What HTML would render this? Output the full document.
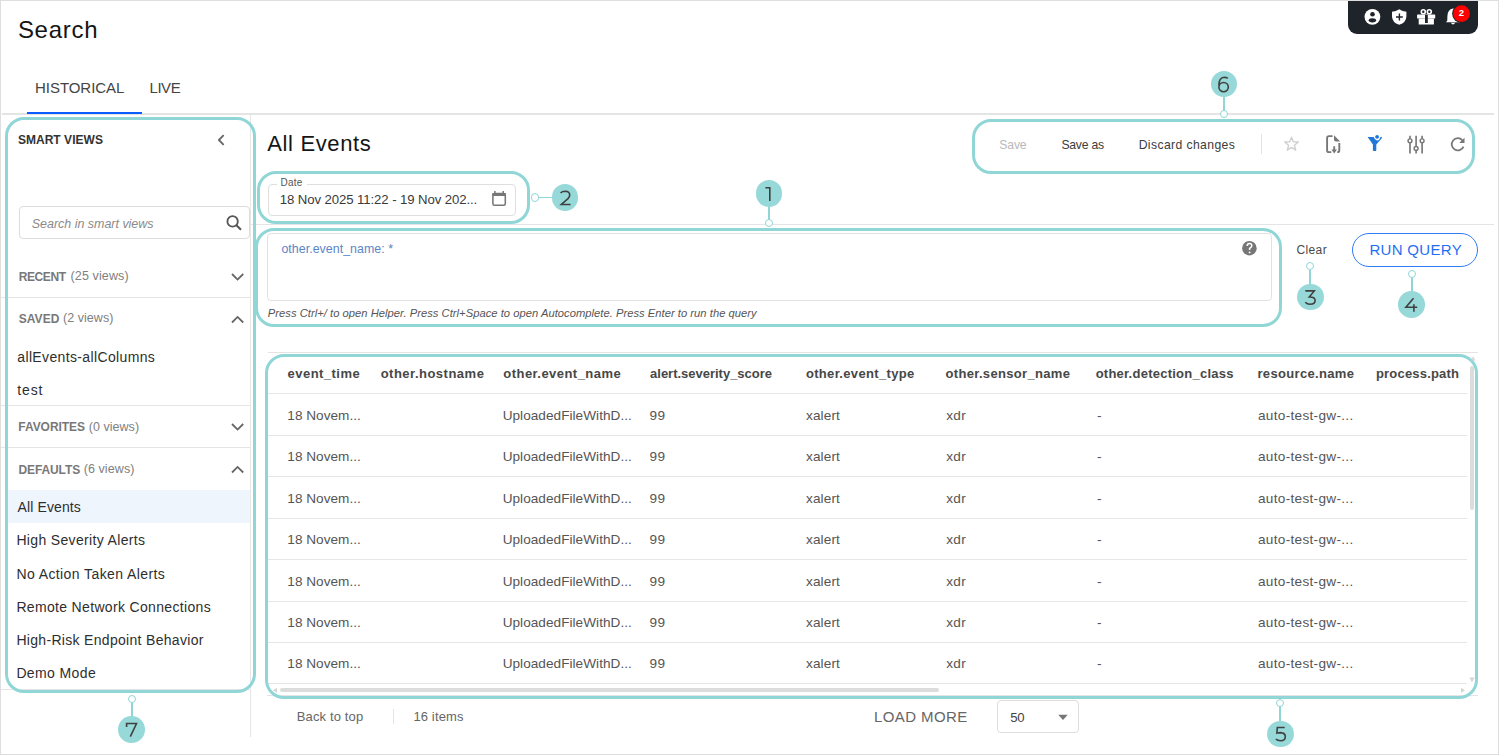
<!DOCTYPE html>
<html><head><meta charset="utf-8">
<style>
*{box-sizing:border-box;margin:0;padding:0}
html,body{width:1499px;height:755px;overflow:hidden;background:#fff;font-family:"Liberation Sans",sans-serif;color:#333}
.a{position:absolute;white-space:nowrap}
svg{position:absolute;overflow:visible}
</style></head><body>

<div class="a" style="left:0px;top:0px;width:1499px;height:755px;border:1px solid #dedede"></div>
<div class="a" style="left:17.92px;top:17.88px;font-size:24px;line-height:24px;color:#151515;letter-spacing:0.708px;">Search</div>
<div class="a" style="left:1348px;top:1px;width:130px;height:33px;background:#1f232a;border-radius:0 0 9px 9px"></div>
<svg style="left:0;top:0" width="1499" height="40">
<circle cx="1372.4" cy="16.8" r="7.9" fill="#fff"/>
<circle cx="1372.5" cy="14.2" r="2.3" fill="#1f232a"/>
<ellipse cx="1372.4" cy="20.3" rx="3.7" ry="2.1" fill="#1f232a"/>
<path d="M1399.2 9.3 Q1402.5 11.6 1406.4 11.8 L1406.4 16.5 Q1406.2 22.6 1399.2 24.8 Q1392.2 22.6 1392 16.5 L1392 11.8 Q1395.9 11.6 1399.2 9.3 Z" fill="#fff"/>
<path d="M1399.4 13.6 V20.4 M1396 17 H1402.8" stroke="#1f232a" stroke-width="1.4"/>
<rect x="1417.1" y="14.4" width="18.1" height="4.2" rx="0.6" fill="#fff"/>
<rect x="1418.7" y="18.4" width="15.2" height="6.1" rx="0.6" fill="#fff"/>
<circle cx="1423.3" cy="11.8" r="2.0" stroke="#fff" stroke-width="1.6" fill="none"/>
<circle cx="1429.3" cy="11.8" r="2.0" stroke="#fff" stroke-width="1.6" fill="none"/>
<rect x="1425" y="15" width="2.8" height="8" fill="#1f232a"/>
<path d="M1453 8.4 Q1447.5 9.4 1447.4 16 L1447.3 20.6 L1446 22.3 L1460 22.3 L1458.7 20.6 L1458.6 16 Q1458.5 9.4 1453 8.4Z" fill="#fff"/>
<path d="M1450.8 22.8 Q1453 26.4 1455.2 22.8Z" fill="#fff"/>
<circle cx="1461.5" cy="13.6" r="9.4" fill="#1f232a"/>
<circle cx="1461.5" cy="13.6" r="8.4" fill="#f00"/>
<text x="1461.4" y="16.2" font-size="9.5" font-weight="bold" fill="#fff" text-anchor="middle" font-family="Liberation Sans">2</text>
</svg>
<div class="a" style="left:35.04px;top:80.00px;font-size:15px;line-height:15px;color:#444;letter-spacing:-0.047px;">HISTORICAL</div>
<div class="a" style="left:149.52px;top:80.00px;font-size:15px;line-height:15px;color:#444;letter-spacing:-0.460px;">LIVE</div>
<div class="a" style="left:2px;top:113px;width:1492px;height:2px;background:#e4e4e4"></div>
<div class="a" style="left:27px;top:112px;width:114.5px;height:2px;background:#0a5cff"></div>
<div class="a" style="left:250px;top:115px;width:1px;height:622px;background:#e6e6e6"></div>
<div class="a" style="left:8px;top:490px;width:242px;height:33px;background:#eff5fd"></div>
<div class="a" style="left:17.92px;top:133.64px;font-size:12px;line-height:12px;color:#333;font-weight:bold;letter-spacing:0.032px;">SMART VIEWS</div>
<svg style="left:0;top:0" width="260" height="700">
<path d="M223.2 135.7 L218.9 140 L223.2 144.3" stroke="#6a6a6a" stroke-width="1.9" stroke-linecap="round" stroke-linejoin="round" fill="none"/>
<path d="M232 274 L237.6 279.6 L243.2 274" stroke="#666" stroke-width="1.8" fill="none"/>
<path d="M232 322.5 L237.6 316.9 L243.2 322.5" stroke="#666" stroke-width="1.8" fill="none"/>
<path d="M232 424 L237.6 429.6 L243.2 424" stroke="#666" stroke-width="1.8" fill="none"/>
<path d="M232 472.5 L237.6 466.9 L243.2 472.5" stroke="#666" stroke-width="1.8" fill="none"/>
<circle cx="232.6" cy="221.4" r="5.2" stroke="#555" stroke-width="1.8" fill="none"/>
<path d="M236.4 225.2 L241 229.8" stroke="#555" stroke-width="2"/>
</svg>
<div class="a" style="left:19px;top:206px;width:230.5px;height:32.6px;border:1px solid #dcdcdc;border-radius:4px"></div>
<div class="a" style="left:31.78px;top:217.72px;font-size:12.5px;line-height:12.5px;color:#8a8a8a;font-style:italic;letter-spacing:-0.024px;">Search in smart views</div>
<div class="a" style="left:18.64px;top:270.64px;font-size:12px;line-height:12px;color:#787878;font-weight:bold;letter-spacing:-0.384px;">RECENT</div>
<div class="a" style="left:70.56px;top:270.22px;font-size:12.5px;line-height:12.5px;color:#808080;letter-spacing:0.124px;">(25 views)</div>
<div class="a" style="left:1px;top:297px;width:249px;height:1px;background:#e4e4e4"></div>
<div class="a" style="left:18.64px;top:312.64px;font-size:12px;line-height:12px;color:#787878;font-weight:bold;letter-spacing:0.080px;">SAVED</div>
<div class="a" style="left:63.06px;top:312.22px;font-size:12.5px;line-height:12.5px;color:#808080;letter-spacing:0.040px;">(2 views)</div>
<div class="a" style="left:17.28px;top:349.75px;font-size:14px;line-height:14px;color:#2e2e2e;letter-spacing:0.359px;">allEvents-allColumns</div>
<div class="a" style="left:17.28px;top:382.85px;font-size:14px;line-height:14px;color:#2e2e2e;letter-spacing:0.887px;">test</div>
<div class="a" style="left:1px;top:405px;width:249px;height:1px;background:#e4e4e4"></div>
<div class="a" style="left:18.28px;top:421.14px;font-size:12px;line-height:12px;color:#787878;font-weight:bold;letter-spacing:-0.040px;">FAVORITES</div>
<div class="a" style="left:88.72px;top:420.72px;font-size:12.5px;line-height:12.5px;color:#808080;letter-spacing:0.040px;">(0 views)</div>
<div class="a" style="left:1px;top:447px;width:249px;height:1px;background:#e4e4e4"></div>
<div class="a" style="left:18.40px;top:463.54px;font-size:12px;line-height:12px;color:#787878;font-weight:bold;letter-spacing:-0.091px;">DEFAULTS</div>
<div class="a" style="left:83.64px;top:463.12px;font-size:12.5px;line-height:12.5px;color:#808080;letter-spacing:0.100px;">(6 views)</div>
<div class="a" style="left:17.58px;top:500.35px;font-size:14px;line-height:14px;color:#2e2e2e;letter-spacing:0.111px;">All Events</div>
<div class="a" style="left:16.38px;top:533.49px;font-size:14px;line-height:14px;color:#2e2e2e;letter-spacing:0.343px;">High Severity Alerts</div>
<div class="a" style="left:16.38px;top:566.63px;font-size:14px;line-height:14px;color:#2e2e2e;letter-spacing:0.413px;">No Action Taken Alerts</div>
<div class="a" style="left:16.38px;top:599.77px;font-size:14px;line-height:14px;color:#2e2e2e;letter-spacing:0.334px;">Remote Network Connections</div>
<div class="a" style="left:16.38px;top:632.91px;font-size:14px;line-height:14px;color:#2e2e2e;letter-spacing:0.311px;">High-Risk Endpoint Behavior</div>
<div class="a" style="left:16.38px;top:666.05px;font-size:14px;line-height:14px;color:#2e2e2e;letter-spacing:0.380px;">Demo Mode</div>
<div class="a" style="left:1px;top:689px;width:249px;height:1px;background:#e4e4e4"></div>
<div class="a" style="left:267.26px;top:133.38px;font-size:22px;line-height:22px;color:#151515;letter-spacing:0.642px;">All Events</div>
<div class="a" style="left:251px;top:224px;width:1243px;height:1px;background:#e4e4e4"></div>
<div class="a" style="left:267.5px;top:183.5px;width:248.5px;height:32px;border:1px solid #dedede;border-radius:4px"></div>
<div class="a" style="left:277px;top:176px;width:30px;height:12px;background:#fff"></div>
<div class="a" style="left:280.40px;top:177.53px;font-size:10px;line-height:10px;color:#555;letter-spacing:0.267px;">Date</div>
<div class="a" style="left:279.80px;top:193.13px;font-size:13.2px;line-height:13.2px;color:#3a3a3a;letter-spacing:-0.100px;">18 Nov 2025 11:22 - 19 Nov 202...</div>
<svg style="left:0;top:0" width="600" height="230">
<rect x="492.9" y="193.6" width="12.4" height="11.7" rx="1.6" stroke="#777" stroke-width="1.55" fill="none"/>
<rect x="492.2" y="192.9" width="13.8" height="3.2" rx="1" fill="#777"/>
<path d="M494.9 191 V193.5 M503.2 191 V193.5" stroke="#777" stroke-width="1.5"/>
</svg>
<div class="a" style="left:267px;top:233px;width:1004.5px;height:68px;border:1px solid #e2e2e2;border-radius:4px"></div>
<div class="a" style="left:281.40px;top:242.50px;font-size:12.4px;line-height:12.4px;color:#5a86c8;letter-spacing:0.044px;">other.event_name: *</div>
<svg style="left:0;top:0" width="1300" height="330">
<circle cx="1249.4" cy="248.2" r="7.3" fill="#777"/>
<path d="M1247.2 246 Q1247.2 243.6 1249.5 243.6 Q1251.8 243.6 1251.8 245.8 Q1251.8 247.2 1249.6 248.4 L1249.6 250" stroke="#fff" stroke-width="1.5" fill="none"/>
<circle cx="1249.6" cy="252.4" r="0.95" fill="#fff"/>
</svg>
<div class="a" style="left:267.82px;top:307.82px;font-size:11.2px;line-height:11.2px;color:#555;font-style:italic;letter-spacing:0.029px;">Press Ctrl+/ to open Helper. Press Ctrl+Space to open Autocomplete. Press Enter to run the query</div>
<div class="a" style="left:1296.40px;top:243.74px;font-size:12px;line-height:12px;color:#4a4a4a;letter-spacing:0.400px;">Clear</div>
<div class="a" style="left:1352px;top:233px;width:126px;height:34px;border:1px solid #2f7cf6;border-radius:17px"></div>
<div class="a" style="left:1369.38px;top:241.60px;font-size:15px;line-height:15px;color:#1f6ff2;letter-spacing:0.320px;">RUN QUERY</div>
<div class="a" style="left:999.30px;top:138.67px;font-size:12.2px;line-height:12.2px;color:#b9b9b9;letter-spacing:-0.160px;">Save</div>
<div class="a" style="left:1061.40px;top:138.67px;font-size:12.2px;line-height:12.2px;color:#3c3c3c;letter-spacing:-0.233px;">Save as</div>
<div class="a" style="left:1138.64px;top:138.67px;font-size:12.2px;line-height:12.2px;color:#3c3c3c;letter-spacing:0.389px;">Discard changes</div>
<div class="a" style="left:1261.2px;top:134px;width:1px;height:20.3px;background:#e3e3e3"></div>
<svg style="left:0;top:0" width="1499" height="180">
<path d="M1291.5 137.2 L1293.3 141.8 L1298.3 142 L1294.4 145.2 L1295.7 150.2 L1291.5 147.4 L1287.3 150.2 L1288.6 145.2 L1284.7 142 L1289.7 141.8 Z" stroke="#d0d0d0" stroke-width="1.4" stroke-linejoin="round" fill="none"/>
<path d="M1331.3 152.1 L1329 152.1 Q1327.1 152.1 1327.1 150.2 L1327.1 138 Q1327.1 136.1 1329 136.1 L1332.6 136.1 M1339.3 143 L1339.3 150.2 Q1339.3 152.1 1337.4 152.1 L1337.2 152.1" stroke="#777" stroke-width="1.9" fill="none"/>
<path d="M1334 135.3 L1340.2 141.6 L1336 141.6 Q1334 141.6 1334 139.6 Z" fill="#777"/>
<path d="M1334.2 146.3 V150.8" stroke="#777" stroke-width="1.9"/>
<path d="M1331.4 149.5 L1337 149.5 L1334.2 153.6 Z" fill="#777"/>
<path d="M1367.6 137.1 L1373.7 137.1 Q1375.2 140.5 1377.5 140.5 Q1379.4 140.5 1380.2 137.4 Q1380.8 136.4 1381.8 137.1 Q1382 137.8 1381.6 138.4 L1376.3 144.4 L1376.3 150.3 Q1376.3 151.1 1375.5 151.1 L1373.7 151.1 Q1372.9 151.1 1372.9 150.3 L1372.9 144.4 Z" fill="#1f78d8"/>
<circle cx="1377.1" cy="136.8" r="1.9" fill="#1f78d8"/>
<path d="M1410 135.8 V153.4 M1416.1 135.8 V153.4 M1422.1 135.8 V153.4" stroke="#777" stroke-width="1.65"/>
<circle cx="1410" cy="140.8" r="1.95" fill="#fff" stroke="#777" stroke-width="1.45"/>
<circle cx="1416.1" cy="148.4" r="1.95" fill="#fff" stroke="#777" stroke-width="1.45"/>
<circle cx="1422.1" cy="140.8" r="1.95" fill="#fff" stroke="#777" stroke-width="1.45"/>
<path d="M1462.4 140.3 A6.1 6.1 0 1 0 1463.5 146.6" stroke="#777" stroke-width="1.75" fill="none"/>
<path d="M1464.5 137.8 L1464.5 142.9 L1459.2 142.9 Z" fill="#777"/>
</svg>
<div class="a" style="left:268px;top:352px;width:1210px;height:1px;background:#e4e4e4"></div>
<div class="a" style="left:287.56px;top:366.50px;font-size:13px;line-height:13px;color:#474747;font-weight:bold;letter-spacing:0.463px;">event_time</div>
<div class="a" style="left:380.64px;top:366.50px;font-size:13px;line-height:13px;color:#474747;font-weight:bold;letter-spacing:0.496px;">other.hostname</div>
<div class="a" style="left:503.32px;top:366.50px;font-size:13px;line-height:13px;color:#474747;font-weight:bold;letter-spacing:0.453px;">other.event_name</div>
<div class="a" style="left:650.08px;top:366.50px;font-size:13px;line-height:13px;color:#474747;font-weight:bold;letter-spacing:-0.011px;">alert.severity_score</div>
<div class="a" style="left:805.90px;top:366.50px;font-size:13px;line-height:13px;color:#474747;font-weight:bold;letter-spacing:0.335px;">other.event_type</div>
<div class="a" style="left:945.56px;top:366.50px;font-size:13px;line-height:13px;color:#474747;font-weight:bold;letter-spacing:0.320px;">other.sensor_name</div>
<div class="a" style="left:1095.64px;top:366.50px;font-size:13px;line-height:13px;color:#474747;font-weight:bold;letter-spacing:0.242px;">other.detection_class</div>
<div class="a" style="left:1257.48px;top:366.50px;font-size:13px;line-height:13px;color:#474747;font-weight:bold;letter-spacing:0.330px;">resource.name</div>
<div class="a" style="left:1375.98px;top:366.50px;font-size:13px;line-height:13px;color:#474747;font-weight:bold;letter-spacing:0.192px;">process.path</div>
<div class="a" style="left:268px;top:393px;width:1199px;height:1px;background:#e6e6e6"></div>
<div class="a" style="left:268px;top:435px;width:1199px;height:1px;background:#e6e6e6"></div>
<div class="a" style="left:268px;top:476px;width:1199px;height:1px;background:#e6e6e6"></div>
<div class="a" style="left:268px;top:518px;width:1199px;height:1px;background:#e6e6e6"></div>
<div class="a" style="left:268px;top:559px;width:1199px;height:1px;background:#e6e6e6"></div>
<div class="a" style="left:268px;top:601px;width:1199px;height:1px;background:#e6e6e6"></div>
<div class="a" style="left:268px;top:642px;width:1199px;height:1px;background:#e6e6e6"></div>
<div class="a" style="left:268px;top:683px;width:1199px;height:1px;background:#e6e6e6"></div>
<div class="a" style="left:287.30px;top:408.79px;font-size:13.6px;line-height:13.6px;color:#555;letter-spacing:0.020px;">18 Novem...</div>
<div class="a" style="left:502.64px;top:408.79px;font-size:13.6px;line-height:13.6px;color:#555;letter-spacing:0.041px;">UploadedFileWithD...</div>
<div class="a" style="left:649.56px;top:408.79px;font-size:13.6px;line-height:13.6px;color:#555;letter-spacing:0.450px;">99</div>
<div class="a" style="left:805.98px;top:408.79px;font-size:13.6px;line-height:13.6px;color:#555;letter-spacing:0.132px;">xalert</div>
<div class="a" style="left:946.16px;top:408.79px;font-size:13.6px;line-height:13.6px;color:#555;letter-spacing:0.400px;">xdr</div>
<div class="a" style="left:1096.98px;top:408.79px;font-size:13.6px;line-height:13.6px;color:#555;letter-spacing:0.100px;">-</div>
<div class="a" style="left:1257.98px;top:408.79px;font-size:13.6px;line-height:13.6px;color:#555;letter-spacing:0.303px;">auto-test-gw-...</div>
<div class="a" style="left:287.30px;top:450.24px;font-size:13.6px;line-height:13.6px;color:#555;letter-spacing:0.020px;">18 Novem...</div>
<div class="a" style="left:502.64px;top:450.24px;font-size:13.6px;line-height:13.6px;color:#555;letter-spacing:0.041px;">UploadedFileWithD...</div>
<div class="a" style="left:649.56px;top:450.24px;font-size:13.6px;line-height:13.6px;color:#555;letter-spacing:0.450px;">99</div>
<div class="a" style="left:805.98px;top:450.24px;font-size:13.6px;line-height:13.6px;color:#555;letter-spacing:0.132px;">xalert</div>
<div class="a" style="left:946.16px;top:450.24px;font-size:13.6px;line-height:13.6px;color:#555;letter-spacing:0.400px;">xdr</div>
<div class="a" style="left:1096.98px;top:450.24px;font-size:13.6px;line-height:13.6px;color:#555;letter-spacing:0.100px;">-</div>
<div class="a" style="left:1257.98px;top:450.24px;font-size:13.6px;line-height:13.6px;color:#555;letter-spacing:0.303px;">auto-test-gw-...</div>
<div class="a" style="left:287.30px;top:491.69px;font-size:13.6px;line-height:13.6px;color:#555;letter-spacing:0.020px;">18 Novem...</div>
<div class="a" style="left:502.64px;top:491.69px;font-size:13.6px;line-height:13.6px;color:#555;letter-spacing:0.041px;">UploadedFileWithD...</div>
<div class="a" style="left:649.56px;top:491.69px;font-size:13.6px;line-height:13.6px;color:#555;letter-spacing:0.450px;">99</div>
<div class="a" style="left:805.98px;top:491.69px;font-size:13.6px;line-height:13.6px;color:#555;letter-spacing:0.132px;">xalert</div>
<div class="a" style="left:946.16px;top:491.69px;font-size:13.6px;line-height:13.6px;color:#555;letter-spacing:0.400px;">xdr</div>
<div class="a" style="left:1096.98px;top:491.69px;font-size:13.6px;line-height:13.6px;color:#555;letter-spacing:0.100px;">-</div>
<div class="a" style="left:1257.98px;top:491.69px;font-size:13.6px;line-height:13.6px;color:#555;letter-spacing:0.303px;">auto-test-gw-...</div>
<div class="a" style="left:287.30px;top:533.14px;font-size:13.6px;line-height:13.6px;color:#555;letter-spacing:0.020px;">18 Novem...</div>
<div class="a" style="left:502.64px;top:533.14px;font-size:13.6px;line-height:13.6px;color:#555;letter-spacing:0.041px;">UploadedFileWithD...</div>
<div class="a" style="left:649.56px;top:533.14px;font-size:13.6px;line-height:13.6px;color:#555;letter-spacing:0.450px;">99</div>
<div class="a" style="left:805.98px;top:533.14px;font-size:13.6px;line-height:13.6px;color:#555;letter-spacing:0.132px;">xalert</div>
<div class="a" style="left:946.16px;top:533.14px;font-size:13.6px;line-height:13.6px;color:#555;letter-spacing:0.400px;">xdr</div>
<div class="a" style="left:1096.98px;top:533.14px;font-size:13.6px;line-height:13.6px;color:#555;letter-spacing:0.100px;">-</div>
<div class="a" style="left:1257.98px;top:533.14px;font-size:13.6px;line-height:13.6px;color:#555;letter-spacing:0.303px;">auto-test-gw-...</div>
<div class="a" style="left:287.30px;top:574.59px;font-size:13.6px;line-height:13.6px;color:#555;letter-spacing:0.020px;">18 Novem...</div>
<div class="a" style="left:502.64px;top:574.59px;font-size:13.6px;line-height:13.6px;color:#555;letter-spacing:0.041px;">UploadedFileWithD...</div>
<div class="a" style="left:649.56px;top:574.59px;font-size:13.6px;line-height:13.6px;color:#555;letter-spacing:0.450px;">99</div>
<div class="a" style="left:805.98px;top:574.59px;font-size:13.6px;line-height:13.6px;color:#555;letter-spacing:0.132px;">xalert</div>
<div class="a" style="left:946.16px;top:574.59px;font-size:13.6px;line-height:13.6px;color:#555;letter-spacing:0.400px;">xdr</div>
<div class="a" style="left:1096.98px;top:574.59px;font-size:13.6px;line-height:13.6px;color:#555;letter-spacing:0.100px;">-</div>
<div class="a" style="left:1257.98px;top:574.59px;font-size:13.6px;line-height:13.6px;color:#555;letter-spacing:0.303px;">auto-test-gw-...</div>
<div class="a" style="left:287.30px;top:616.04px;font-size:13.6px;line-height:13.6px;color:#555;letter-spacing:0.020px;">18 Novem...</div>
<div class="a" style="left:502.64px;top:616.04px;font-size:13.6px;line-height:13.6px;color:#555;letter-spacing:0.041px;">UploadedFileWithD...</div>
<div class="a" style="left:649.56px;top:616.04px;font-size:13.6px;line-height:13.6px;color:#555;letter-spacing:0.450px;">99</div>
<div class="a" style="left:805.98px;top:616.04px;font-size:13.6px;line-height:13.6px;color:#555;letter-spacing:0.132px;">xalert</div>
<div class="a" style="left:946.16px;top:616.04px;font-size:13.6px;line-height:13.6px;color:#555;letter-spacing:0.400px;">xdr</div>
<div class="a" style="left:1096.98px;top:616.04px;font-size:13.6px;line-height:13.6px;color:#555;letter-spacing:0.100px;">-</div>
<div class="a" style="left:1257.98px;top:616.04px;font-size:13.6px;line-height:13.6px;color:#555;letter-spacing:0.303px;">auto-test-gw-...</div>
<div class="a" style="left:287.30px;top:657.49px;font-size:13.6px;line-height:13.6px;color:#555;letter-spacing:0.020px;">18 Novem...</div>
<div class="a" style="left:502.64px;top:657.49px;font-size:13.6px;line-height:13.6px;color:#555;letter-spacing:0.041px;">UploadedFileWithD...</div>
<div class="a" style="left:649.56px;top:657.49px;font-size:13.6px;line-height:13.6px;color:#555;letter-spacing:0.450px;">99</div>
<div class="a" style="left:805.98px;top:657.49px;font-size:13.6px;line-height:13.6px;color:#555;letter-spacing:0.132px;">xalert</div>
<div class="a" style="left:946.16px;top:657.49px;font-size:13.6px;line-height:13.6px;color:#555;letter-spacing:0.400px;">xdr</div>
<div class="a" style="left:1096.98px;top:657.49px;font-size:13.6px;line-height:13.6px;color:#555;letter-spacing:0.100px;">-</div>
<div class="a" style="left:1257.98px;top:657.49px;font-size:13.6px;line-height:13.6px;color:#555;letter-spacing:0.303px;">auto-test-gw-...</div>
<div class="a" style="left:1470px;top:366px;width:4px;height:144px;background:#dcdcdc;border-radius:2px"></div>
<svg style="left:0;top:0" width="1499" height="755">
<path d="M1469.5 677.5 L1472 682.5 L1474.5 677.5Z" fill="#d4d4d4"/>
<path d="M273 690.2 L277 687.7 L277 692.7Z" fill="#d4d4d4"/>
<path d="M1461 687.7 L1465 690.2 L1461 692.7Z" fill="#d4d4d4"/>
</svg>
<div class="a" style="left:280px;top:687.8px;width:658.5px;height:4.7px;background:#dcdcdc;border-radius:2.5px"></div>
<div class="a" style="left:267px;top:695px;width:1211px;height:1px;background:#e4e4e4"></div>
<div class="a" style="left:296.80px;top:710.00px;font-size:13px;line-height:13px;color:#666;letter-spacing:0.128px;">Back to top</div>
<div class="a" style="left:393px;top:708.7px;width:1px;height:15.7px;background:#e4e4e4"></div>
<div class="a" style="left:413.38px;top:710.00px;font-size:13px;line-height:13px;color:#666;letter-spacing:0.137px;">16 items</div>
<div class="a" style="left:873.88px;top:709.00px;font-size:15px;line-height:15px;color:#666;letter-spacing:0.420px;">LOAD MORE</div>
<div class="a" style="left:997.4px;top:700.4px;width:82px;height:32.5px;border:1px solid #dedede;border-radius:4px"></div>
<div class="a" style="left:1010.22px;top:710.53px;font-size:13.2px;line-height:13.2px;color:#444;letter-spacing:-0.240px;">50</div>
<svg style="left:0;top:0" width="1499" height="755">
<path d="M1058.2 714.8 L1067.8 714.8 L1063 720.1Z" fill="#777"/>
</svg>
<div class="a" style="left:5px;top:117px;width:251px;height:576px;border:3.3px solid #91d6d6;border-radius:19px"></div>
<div class="a" style="left:257px;top:171px;width:273.3px;height:53px;border:3.3px solid #91d6d6;border-radius:19px"></div>
<div class="a" style="left:255px;top:228px;width:1027px;height:99px;border:3.3px solid #91d6d6;border-radius:19px"></div>
<div class="a" style="left:972px;top:119px;width:503px;height:55px;border:3.3px solid #91d6d6;border-radius:19px"></div>
<div class="a" style="left:265px;top:354px;width:1213px;height:345px;border:3.3px solid #91d6d6;border-radius:19px"></div>
<div class="a" style="left:768.1px;top:206px;width:1.8px;height:14px;background:#91d6d6"></div>
<div class="a" style="left:764.90px;top:219.30px;width:8.2px;height:8.2px;border-radius:50%;background:#fff;border:1.95px solid #91d6d6"></div>
<div class="a" style="left:755.70px;top:180.20px;width:26.6px;height:26.6px;border-radius:50%;background:#97d9d9"></div>
<svg style="left:0;top:0" width="1499" height="755"><path d="M765.4 187.7 L769.8 187.7 L769.8 201" stroke="#404040" stroke-width="1.6" fill="none"/></svg>
<div class="a" style="left:538px;top:196.6px;width:14px;height:1.8px;background:#91d6d6"></div>
<div class="a" style="left:531.10px;top:193.40px;width:8.2px;height:8.2px;border-radius:50%;background:#fff;border:1.95px solid #91d6d6"></div>
<div class="a" style="left:551.50px;top:184.20px;width:26.6px;height:26.6px;border-radius:50%;background:#97d9d9"></div>
<svg style="left:0;top:0" width="1499" height="755"><path d="M560.6 193 Q562 191.2 565.2 191.2 Q569.7 191.3 569.7 195 Q569.7 196.8 568 198.6 L561.3 204.5 H570.6" stroke="#404040" stroke-width="1.6" fill="none"/></svg>
<div class="a" style="left:1309.3px;top:270px;width:1.8px;height:15px;background:#91d6d6"></div>
<div class="a" style="left:1306.10px;top:262.30px;width:8.2px;height:8.2px;border-radius:50%;background:#fff;border:1.95px solid #91d6d6"></div>
<div class="a" style="left:1297.00px;top:283.90px;width:26.6px;height:26.6px;border-radius:50%;background:#97d9d9"></div>
<svg style="left:0;top:0" width="1499" height="755"><path d="M1305.3 290.9 H1314.3 L1309.3 297 Q1315.1 296.8 1315.1 300.5 Q1315.1 304.2 1310 304.2 Q1307 304.2 1305.3 302.3" stroke="#404040" stroke-width="1.6" fill="none"/></svg>
<div class="a" style="left:1411.3px;top:277px;width:1.8px;height:15px;background:#91d6d6"></div>
<div class="a" style="left:1408.10px;top:269.60px;width:8.2px;height:8.2px;border-radius:50%;background:#fff;border:1.95px solid #91d6d6"></div>
<div class="a" style="left:1398.10px;top:291.20px;width:26.6px;height:26.6px;border-radius:50%;background:#97d9d9"></div>
<svg style="left:0;top:0" width="1499" height="755"><path d="M1413.5 298.3 L1405.9 307.3 L1417.2 307.3 M1413.9 304.2 L1413.9 311.8" stroke="#404040" stroke-width="1.6" fill="none"/></svg>
<div class="a" style="left:1279.3999999999999px;top:706px;width:1.8px;height:16px;background:#91d6d6"></div>
<div class="a" style="left:1276.20px;top:699.00px;width:8.2px;height:8.2px;border-radius:50%;background:#fff;border:1.95px solid #91d6d6"></div>
<div class="a" style="left:1267.20px;top:720.70px;width:26.6px;height:26.6px;border-radius:50%;background:#97d9d9"></div>
<svg style="left:0;top:0" width="1499" height="755"><path d="M1284.7 727.5 H1277.3 L1276.9 733.1 Q1278.5 732.6 1280.5 732.6 Q1285.3 732.8 1285.3 736.7 Q1285.3 740.7 1280.5 740.7 Q1277.6 740.7 1275.9 739.1" stroke="#404040" stroke-width="1.6" fill="none"/></svg>
<div class="a" style="left:1223.1px;top:96px;width:1.8px;height:15px;background:#91d6d6"></div>
<div class="a" style="left:1219.90px;top:110.00px;width:8.2px;height:8.2px;border-radius:50%;background:#fff;border:1.95px solid #91d6d6"></div>
<div class="a" style="left:1210.90px;top:70.70px;width:26.6px;height:26.6px;border-radius:50%;background:#97d9d9"></div>
<svg style="left:0;top:0" width="1499" height="755"><path d="M1227.8 78.4 Q1226.4 77.2 1224.2 77.2 Q1218.9 77.4 1218.9 85.5 M1223.6 87.1 m-4.7 0 a4.7 4.6 0 1 0 9.4 0 a4.7 4.6 0 1 0 -9.4 0" stroke="#404040" stroke-width="1.6" fill="none"/></svg>
<div class="a" style="left:131.2px;top:702px;width:1.8px;height:16px;background:#91d6d6"></div>
<div class="a" style="left:128.00px;top:694.80px;width:8.2px;height:8.2px;border-radius:50%;background:#fff;border:1.95px solid #91d6d6"></div>
<div class="a" style="left:118.10px;top:716.40px;width:26.6px;height:26.6px;border-radius:50%;background:#97d9d9"></div>
<svg style="left:0;top:0" width="1499" height="755"><path d="M126.6 726.9 L126.6 723.5 L136.5 723.5 L130.3 736.7" stroke="#404040" stroke-width="1.6" fill="none"/></svg>
<svg style="left:0;top:0" width="1499" height="755"><path d="M1470.6 360.7 L1473.1 356.1 L1475.7 360.7Z" fill="#d0d0d0" fill-opacity="0.75"/></svg>
</body></html>
